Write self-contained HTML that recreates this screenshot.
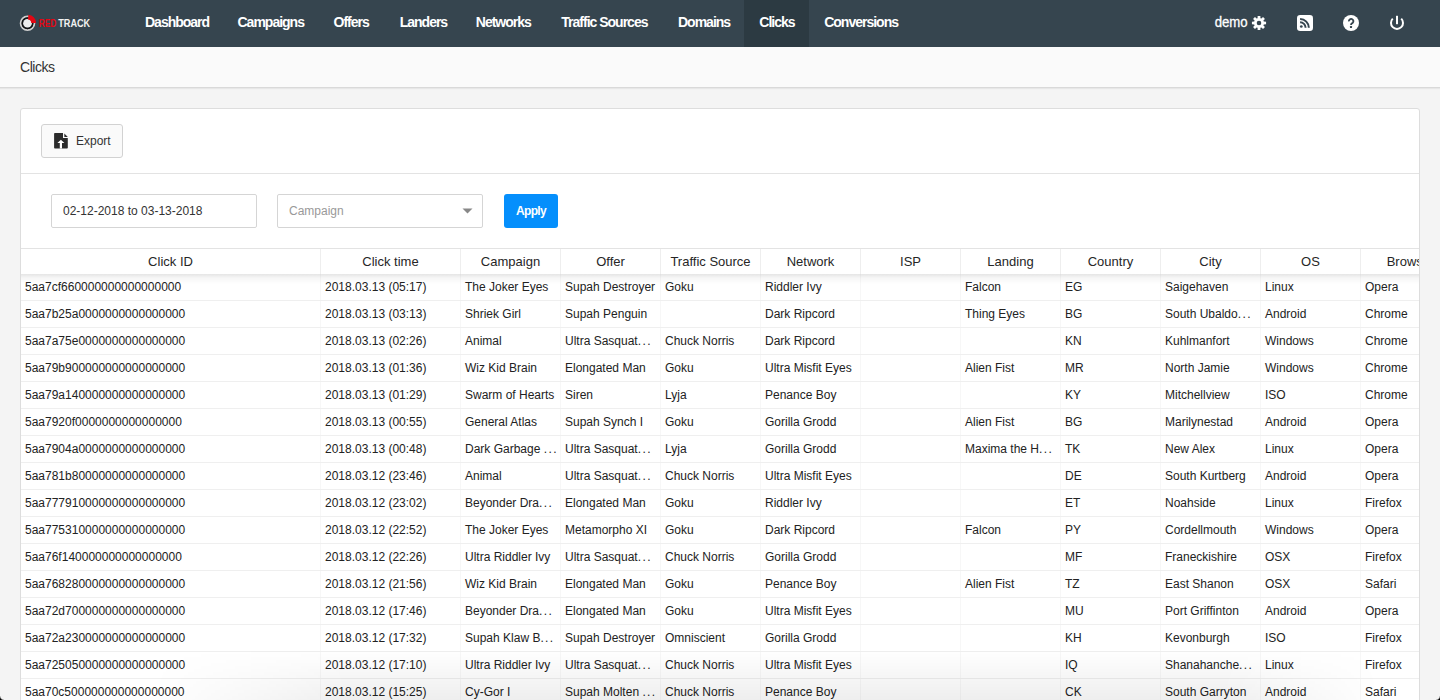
<!DOCTYPE html>
<html><head><meta charset="utf-8">
<style>
*{box-sizing:border-box;margin:0;padding:0}
html,body{width:1440px;height:700px;overflow:hidden}
body{background:#f4f4f4;font-family:"Liberation Sans",sans-serif;color:#333;position:relative}
#nav{position:absolute;left:0;top:0;width:1440px;height:47px;background:#36454f}
#nav .it{position:absolute;top:0;height:47px;line-height:44px;color:#fff;font-size:14px;font-weight:bold;padding:0 15px;white-space:nowrap;letter-spacing:-1px}
#nav .act{width:65px}
#nav .act{background:#2c3a42}
#crumb{position:absolute;left:0;top:47px;width:1440px;height:41px;background:#fafafa;border-bottom:1px solid #d9d9d9;box-shadow:0 1px 1px rgba(0,0,0,0.05)}
#crumb span{position:absolute;left:20px;top:11.6px;font-size:14px;line-height:16px;color:#333;letter-spacing:-0.45px}
#panel{position:absolute;left:20px;top:108px;width:1400px;height:620px;background:#fff;border:1px solid #ddd;border-radius:3px;overflow:hidden}
#exp{position:absolute;left:0;top:0;width:1398px;height:65px;border-bottom:1px solid #e3e3e3}
.btn-exp{position:absolute;left:20px;top:15px;width:82px;height:34px;border:1px solid #d2d2d2;border-radius:3px;background:#fafafa}
.btn-exp span{position:absolute;left:34px;top:9px;font-size:12px;line-height:14px;color:#333}
.inp{position:absolute;top:85px;height:34px;border:1px solid #d5d5d5;border-radius:2px;background:#fff}
.inp span{position:absolute;left:11px;top:9px;font-size:12px;line-height:14px}
.apply{position:absolute;left:483px;top:85px;width:54px;height:34px;background:#058ffc;border-radius:3px;color:#fff;font-size:12px;font-weight:bold;line-height:34px;text-align:center;letter-spacing:-0.7px}
#tbl{position:absolute;left:0;top:139px;width:1398px}
.hd{position:absolute;left:0;top:0;height:26px;width:1398px;border-top:1px solid #e3e3e3;background:#fff;z-index:2}
.hsh{position:absolute;left:0;top:26px;width:1398px;height:10px;background:linear-gradient(rgba(0,0,0,0.1),rgba(0,0,0,0.035) 40%,rgba(0,0,0,0));z-index:3}
.hd div{position:absolute;top:0;height:25px;line-height:25px;text-align:center;font-size:13px;color:#262626;border-right:1px solid #eee;white-space:nowrap;overflow:hidden}
.rows{position:absolute;left:0;top:26px;width:1398px}
.r{position:relative;height:27px;border-bottom:1px solid #efefef}
.r div{position:absolute;top:0;height:26px;line-height:26px;font-size:12px;color:#222;padding-left:4px;border-right:1px solid #f7f7f7;white-space:nowrap;overflow:hidden}

.el{letter-spacing:1.4px}
#fade{position:absolute;left:21px;top:650px;width:1398px;height:50px;background:linear-gradient(rgba(0,0,0,0),rgba(0,0,0,0.065));z-index:10;-webkit-mask-image:linear-gradient(to right,transparent 0px,transparent 130px,#000 330px,#000 1200px,transparent 1360px)}
</style></head><body>
<div id="nav">
<div class="it" style="left:130px">Dashboard</div>
<div class="it" style="left:222.5px">Campaigns</div>
<div class="it" style="left:318.5px">Offers</div>
<div class="it" style="left:384.7px">Landers</div>
<div class="it" style="left:460.8px">Networks</div>
<div class="it" style="left:546.3px">Traffic Sources</div>
<div class="it" style="left:663px">Domains</div>
<div class="it act" style="left:744.3px">Clicks</div>
<div class="it" style="left:809.2px">Conversions</div>
<svg style="position:absolute;left:0;top:0" width="1440" height="46" viewBox="0 0 1440 46">
<circle cx="27.5" cy="23.2" r="6.9" fill="none" stroke="#d0d0d0" stroke-width="1.8"/>
<circle cx="27.5" cy="23.2" r="5.2" fill="none" stroke="#111" stroke-width="1.6"/>
<circle cx="27.5" cy="23.2" r="4.3" fill="#ececec"/>
<path d="M28.40,14.65 A8.60,8.60 0 0,1 36.09,22.90 L31.30,23.07 A3.80,3.80 0 0,0 27.90,19.42Z" fill="#e30613"/>
<text x="38.8" y="26.7" font-family="Liberation Sans" font-weight="bold" font-size="10.6" fill="#e30613" textLength="17.5" lengthAdjust="spacingAndGlyphs">RED</text>
<text x="58.2" y="26.7" font-family="Liberation Sans" font-weight="bold" font-size="10.6" fill="#f2f2f2" textLength="32" lengthAdjust="spacingAndGlyphs">TRACK</text>
<text x="1214.7" y="27.2" font-family="Liberation Sans" font-size="14" fill="#fff" stroke="#fff" stroke-width="0.3" textLength="33" lengthAdjust="spacingAndGlyphs">demo</text>
<path d="M1257.57,18.21 L1257.64,15.93 L1260.36,15.93 L1260.43,18.21 L1261.38,18.60 L1263.04,17.04 L1264.96,18.96 L1263.40,20.62 L1263.79,21.57 L1266.07,21.64 L1266.07,24.36 L1263.79,24.43 L1263.40,25.38 L1264.96,27.04 L1263.04,28.96 L1261.38,27.40 L1260.43,27.79 L1260.36,30.07 L1257.64,30.07 L1257.57,27.79 L1256.62,27.40 L1254.96,28.96 L1253.04,27.04 L1254.60,25.38 L1254.21,24.43 L1251.93,24.36 L1251.93,21.64 L1254.21,21.57 L1254.60,20.62 L1253.04,18.96 L1254.96,17.04 L1256.62,18.60Z M1256.70,23.00 a2.3,2.3 0 1,0 4.6,0 a2.3,2.3 0 1,0 -4.6,0Z" fill="#fff" fill-rule="evenodd"/>
<rect x="1297" y="15" width="16" height="16" rx="3.2" fill="#fff"/>
<circle cx="1301.3" cy="26.5" r="1.35" fill="#36454f"/>
<path d="M1300.1,22.3 A5.5,5.5 0 0,1 1305.6,27.8" fill="none" stroke="#36454f" stroke-width="2"/>
<path d="M1300.1,19.05 A8.75,8.75 0 0,1 1308.85,27.8" fill="none" stroke="#36454f" stroke-width="2"/>
<circle cx="1351" cy="23" r="8" fill="#fff"/>
<path d="M1348.9,21.4 A2.25,2.25 0 1,1 1352.7,22.8 Q1351,23.6 1351,24.9" fill="none" stroke="#36454f" stroke-width="1.9"/><rect x="1349.95" y="25.9" width="2.1" height="2.1" rx="0.5" fill="#36454f"/>
<path d="M1392.76,18.66 A6,6 0 1,0 1401.24,18.66" fill="none" stroke="#fff" stroke-width="2"/>
<rect x="1396" y="15.8" width="2" height="8.4" fill="#fff"/>
</svg>
</div>
<div id="crumb"><span>Clicks</span></div>
<div id="panel">
  <div id="exp"><div class="btn-exp"><svg style="position:absolute;left:11px;top:7px" width="16" height="18" viewBox="0 0 16 18"><path d="M1.1,1.8 Q1.1,1 1.9,1 L10,1 L10,5.9 L14.8,5.9 L14.8,15.8 Q14.8,16.6 14,16.6 L1.9,16.6 Q1.1,16.6 1.1,15.8Z" fill="#2b2b2b"/><path d="M11.3,1.5 L14.8,4.9 L11.3,4.9Z" fill="#2b2b2b"/><path d="M7.9,7.7 L11.4,11 L9,11 L9,16.6 L6.8,16.6 L6.8,11 L4.4,11Z" fill="#fff"/></svg><span>Export</span></div></div>
  <div class="inp" style="left:30px;width:206px"><span>02-12-2018 to 03-13-2018</span></div>
  <div class="inp" style="left:256px;width:206px"><span style="color:#999">Campaign</span><svg style="position:absolute;left:183.5px;top:13px" width="11" height="6" viewBox="0 0 11 6"><path d="M0.5,0.5 L10.5,0.5 L5.5,5.5Z" fill="#888"/></svg></div>
  <div class="apply">Apply</div>
  <div id="tbl">
    <div class="hd"><div style="left:0px;width:300px">Click ID</div><div style="left:300px;width:140px">Click time</div><div style="left:440px;width:100px">Campaign</div><div style="left:540px;width:100px">Offer</div><div style="left:640px;width:100px">Traffic Source</div><div style="left:740px;width:100px">Network</div><div style="left:840px;width:100px">ISP</div><div style="left:940px;width:100px">Landing</div><div style="left:1040px;width:100px">Country</div><div style="left:1140px;width:100px">City</div><div style="left:1240px;width:100px">OS</div><div style="left:1340px;width:100px">Browser</div></div>
    <div class="hsh"></div>
    <div class="rows">
<div class="r"><div style="left:0px;width:300px">5aa7cf660000000000000000</div><div style="left:300px;width:140px">2018.03.13 (05:17)</div><div style="left:440px;width:100px">The Joker Eyes</div><div style="left:540px;width:100px">Supah Destroyer</div><div style="left:640px;width:100px">Goku</div><div style="left:740px;width:100px">Riddler Ivy</div><div style="left:840px;width:100px"></div><div style="left:940px;width:100px">Falcon</div><div style="left:1040px;width:100px">EG</div><div style="left:1140px;width:100px">Saigehaven</div><div style="left:1240px;width:100px">Linux</div><div style="left:1340px;width:100px">Opera</div></div>
<div class="r"><div style="left:0px;width:300px">5aa7b25a0000000000000000</div><div style="left:300px;width:140px">2018.03.13 (03:13)</div><div style="left:440px;width:100px">Shriek Girl</div><div style="left:540px;width:100px">Supah Penguin</div><div style="left:640px;width:100px"></div><div style="left:740px;width:100px">Dark Ripcord</div><div style="left:840px;width:100px"></div><div style="left:940px;width:100px">Thing Eyes</div><div style="left:1040px;width:100px">BG</div><div style="left:1140px;width:100px">South Ubaldo<span class="el">...</span></div><div style="left:1240px;width:100px">Android</div><div style="left:1340px;width:100px">Chrome</div></div>
<div class="r"><div style="left:0px;width:300px">5aa7a75e0000000000000000</div><div style="left:300px;width:140px">2018.03.13 (02:26)</div><div style="left:440px;width:100px">Animal</div><div style="left:540px;width:100px">Ultra Sasquat<span class="el">...</span></div><div style="left:640px;width:100px">Chuck Norris</div><div style="left:740px;width:100px">Dark Ripcord</div><div style="left:840px;width:100px"></div><div style="left:940px;width:100px"></div><div style="left:1040px;width:100px">KN</div><div style="left:1140px;width:100px">Kuhlmanfort</div><div style="left:1240px;width:100px">Windows</div><div style="left:1340px;width:100px">Chrome</div></div>
<div class="r"><div style="left:0px;width:300px">5aa79b900000000000000000</div><div style="left:300px;width:140px">2018.03.13 (01:36)</div><div style="left:440px;width:100px">Wiz Kid Brain</div><div style="left:540px;width:100px">Elongated Man</div><div style="left:640px;width:100px">Goku</div><div style="left:740px;width:100px">Ultra Misfit Eyes</div><div style="left:840px;width:100px"></div><div style="left:940px;width:100px">Alien Fist</div><div style="left:1040px;width:100px">MR</div><div style="left:1140px;width:100px">North Jamie</div><div style="left:1240px;width:100px">Windows</div><div style="left:1340px;width:100px">Chrome</div></div>
<div class="r"><div style="left:0px;width:300px">5aa79a140000000000000000</div><div style="left:300px;width:140px">2018.03.13 (01:29)</div><div style="left:440px;width:100px">Swarm of Hearts</div><div style="left:540px;width:100px">Siren</div><div style="left:640px;width:100px">Lyja</div><div style="left:740px;width:100px">Penance Boy</div><div style="left:840px;width:100px"></div><div style="left:940px;width:100px"></div><div style="left:1040px;width:100px">KY</div><div style="left:1140px;width:100px">Mitchellview</div><div style="left:1240px;width:100px">ISO</div><div style="left:1340px;width:100px">Chrome</div></div>
<div class="r"><div style="left:0px;width:300px">5aa7920f0000000000000000</div><div style="left:300px;width:140px">2018.03.13 (00:55)</div><div style="left:440px;width:100px">General Atlas</div><div style="left:540px;width:100px">Supah Synch I</div><div style="left:640px;width:100px">Goku</div><div style="left:740px;width:100px">Gorilla Grodd</div><div style="left:840px;width:100px"></div><div style="left:940px;width:100px">Alien Fist</div><div style="left:1040px;width:100px">BG</div><div style="left:1140px;width:100px">Marilynestad</div><div style="left:1240px;width:100px">Android</div><div style="left:1340px;width:100px">Opera</div></div>
<div class="r"><div style="left:0px;width:300px">5aa7904a0000000000000000</div><div style="left:300px;width:140px">2018.03.13 (00:48)</div><div style="left:440px;width:100px">Dark Garbage <span class="el">...</span></div><div style="left:540px;width:100px">Ultra Sasquat<span class="el">...</span></div><div style="left:640px;width:100px">Lyja</div><div style="left:740px;width:100px">Gorilla Grodd</div><div style="left:840px;width:100px"></div><div style="left:940px;width:100px">Maxima the H<span class="el">...</span></div><div style="left:1040px;width:100px">TK</div><div style="left:1140px;width:100px">New Alex</div><div style="left:1240px;width:100px">Linux</div><div style="left:1340px;width:100px">Opera</div></div>
<div class="r"><div style="left:0px;width:300px">5aa781b80000000000000000</div><div style="left:300px;width:140px">2018.03.12 (23:46)</div><div style="left:440px;width:100px">Animal</div><div style="left:540px;width:100px">Ultra Sasquat<span class="el">...</span></div><div style="left:640px;width:100px">Chuck Norris</div><div style="left:740px;width:100px">Ultra Misfit Eyes</div><div style="left:840px;width:100px"></div><div style="left:940px;width:100px"></div><div style="left:1040px;width:100px">DE</div><div style="left:1140px;width:100px">South Kurtberg</div><div style="left:1240px;width:100px">Android</div><div style="left:1340px;width:100px">Opera</div></div>
<div class="r"><div style="left:0px;width:300px">5aa777910000000000000000</div><div style="left:300px;width:140px">2018.03.12 (23:02)</div><div style="left:440px;width:100px">Beyonder Dra<span class="el">...</span></div><div style="left:540px;width:100px">Elongated Man</div><div style="left:640px;width:100px">Goku</div><div style="left:740px;width:100px">Riddler Ivy</div><div style="left:840px;width:100px"></div><div style="left:940px;width:100px"></div><div style="left:1040px;width:100px">ET</div><div style="left:1140px;width:100px">Noahside</div><div style="left:1240px;width:100px">Linux</div><div style="left:1340px;width:100px">Firefox</div></div>
<div class="r"><div style="left:0px;width:300px">5aa775310000000000000000</div><div style="left:300px;width:140px">2018.03.12 (22:52)</div><div style="left:440px;width:100px">The Joker Eyes</div><div style="left:540px;width:100px">Metamorpho XI</div><div style="left:640px;width:100px">Goku</div><div style="left:740px;width:100px">Dark Ripcord</div><div style="left:840px;width:100px"></div><div style="left:940px;width:100px">Falcon</div><div style="left:1040px;width:100px">PY</div><div style="left:1140px;width:100px">Cordellmouth</div><div style="left:1240px;width:100px">Windows</div><div style="left:1340px;width:100px">Opera</div></div>
<div class="r"><div style="left:0px;width:300px">5aa76f140000000000000000</div><div style="left:300px;width:140px">2018.03.12 (22:26)</div><div style="left:440px;width:100px">Ultra Riddler Ivy</div><div style="left:540px;width:100px">Ultra Sasquat<span class="el">...</span></div><div style="left:640px;width:100px">Chuck Norris</div><div style="left:740px;width:100px">Gorilla Grodd</div><div style="left:840px;width:100px"></div><div style="left:940px;width:100px"></div><div style="left:1040px;width:100px">MF</div><div style="left:1140px;width:100px">Franeckishire</div><div style="left:1240px;width:100px">OSX</div><div style="left:1340px;width:100px">Firefox</div></div>
<div class="r"><div style="left:0px;width:300px">5aa768280000000000000000</div><div style="left:300px;width:140px">2018.03.12 (21:56)</div><div style="left:440px;width:100px">Wiz Kid Brain</div><div style="left:540px;width:100px">Elongated Man</div><div style="left:640px;width:100px">Goku</div><div style="left:740px;width:100px">Penance Boy</div><div style="left:840px;width:100px"></div><div style="left:940px;width:100px">Alien Fist</div><div style="left:1040px;width:100px">TZ</div><div style="left:1140px;width:100px">East Shanon</div><div style="left:1240px;width:100px">OSX</div><div style="left:1340px;width:100px">Safari</div></div>
<div class="r"><div style="left:0px;width:300px">5aa72d700000000000000000</div><div style="left:300px;width:140px">2018.03.12 (17:46)</div><div style="left:440px;width:100px">Beyonder Dra<span class="el">...</span></div><div style="left:540px;width:100px">Elongated Man</div><div style="left:640px;width:100px">Goku</div><div style="left:740px;width:100px">Ultra Misfit Eyes</div><div style="left:840px;width:100px"></div><div style="left:940px;width:100px"></div><div style="left:1040px;width:100px">MU</div><div style="left:1140px;width:100px">Port Griffinton</div><div style="left:1240px;width:100px">Android</div><div style="left:1340px;width:100px">Opera</div></div>
<div class="r"><div style="left:0px;width:300px">5aa72a230000000000000000</div><div style="left:300px;width:140px">2018.03.12 (17:32)</div><div style="left:440px;width:100px">Supah Klaw B<span class="el">...</span></div><div style="left:540px;width:100px">Supah Destroyer</div><div style="left:640px;width:100px">Omniscient</div><div style="left:740px;width:100px">Gorilla Grodd</div><div style="left:840px;width:100px"></div><div style="left:940px;width:100px"></div><div style="left:1040px;width:100px">KH</div><div style="left:1140px;width:100px">Kevonburgh</div><div style="left:1240px;width:100px">ISO</div><div style="left:1340px;width:100px">Firefox</div></div>
<div class="r"><div style="left:0px;width:300px">5aa725050000000000000000</div><div style="left:300px;width:140px">2018.03.12 (17:10)</div><div style="left:440px;width:100px">Ultra Riddler Ivy</div><div style="left:540px;width:100px">Ultra Sasquat<span class="el">...</span></div><div style="left:640px;width:100px">Chuck Norris</div><div style="left:740px;width:100px">Ultra Misfit Eyes</div><div style="left:840px;width:100px"></div><div style="left:940px;width:100px"></div><div style="left:1040px;width:100px">IQ</div><div style="left:1140px;width:100px">Shanahanche<span class="el">...</span></div><div style="left:1240px;width:100px">Linux</div><div style="left:1340px;width:100px">Firefox</div></div>
<div class="r"><div style="left:0px;width:300px">5aa70c500000000000000000</div><div style="left:300px;width:140px">2018.03.12 (15:25)</div><div style="left:440px;width:100px">Cy-Gor I</div><div style="left:540px;width:100px">Supah Molten <span class="el">...</span></div><div style="left:640px;width:100px">Chuck Norris</div><div style="left:740px;width:100px">Penance Boy</div><div style="left:840px;width:100px"></div><div style="left:940px;width:100px"></div><div style="left:1040px;width:100px">CK</div><div style="left:1140px;width:100px">South Garryton</div><div style="left:1240px;width:100px">Android</div><div style="left:1340px;width:100px">Safari</div></div>
</div>
  </div>
</div>
<div id="fade"></div>
<div style="position:absolute;left:0;top:696px;width:4px;height:4px;background:radial-gradient(circle at 4px 0px,rgba(0,0,0,0) 3.3px,#000 4.6px);z-index:11"></div>
<div style="position:absolute;left:1436px;top:696px;width:4px;height:4px;background:radial-gradient(circle at 0px 0px,rgba(0,0,0,0) 3.3px,#000 4.6px);z-index:11"></div>
</body></html>
